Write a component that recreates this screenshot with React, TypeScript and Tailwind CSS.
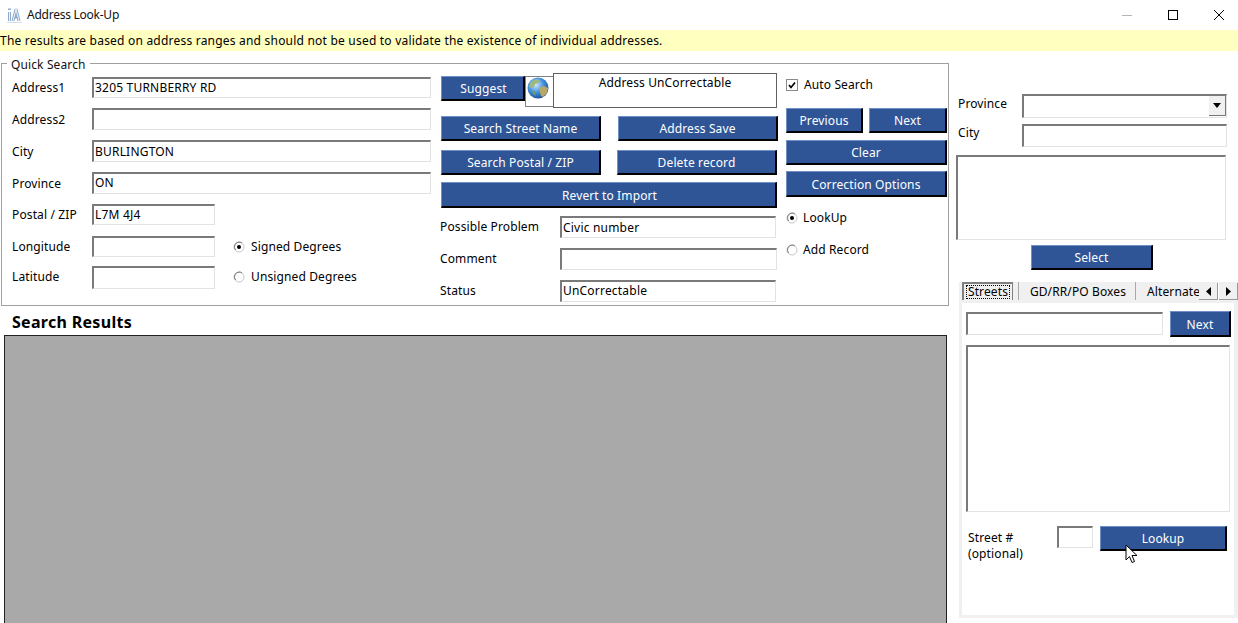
import React from "react";

function Btn({ className, children }: { className: string; children: React.ReactNode }) {
  return (
    <div
      className={`flex items-center justify-center pt-[2px] bg-[#2f5597] text-white border-t border-l border-t-[#6f8fc6] border-l-[#6f8fc6] border-b-2 border-r-2 border-b-black border-r-black ${className}`}
    >
      {children}
    </div>
  );
}

function Input({ className, value }: { className: string; value?: string }) {
  return (
    <div
      className={`flex items-center bg-white pb-px pl-px border-t-2 border-l-2 border-t-[#7a7a7a] border-l-[#7a7a7a] border-b border-r border-b-[#e3e3e3] border-r-[#e3e3e3] whitespace-nowrap tracking-[0.2px] ${className}`}
    >
      {value}
    </div>
  );
}

function Radio({ checked, label, className }: { checked?: boolean; label: string; className: string }) {
  return (
    <div className={`flex items-center ${className}`}>
      <svg width="12" height="12" viewBox="0 0 12 12">
        <circle cx="6" cy="6" r="5" fill="#fff" stroke="#c8c8c8" />
        <path d="M2.5 9A5 5 0 0 1 6 1a5 5 0 0 1 3 1" fill="none" stroke="#777" />
        {checked && <circle cx="6" cy="6" r="2" fill="#000" />}
      </svg>
      <span>{label}</span>
    </div>
  );
}

function Globe() {
  return (
    <svg width="22" height="22" viewBox="0 0 22 22">
      <defs>
        <radialGradient id="ocean" cx="0.4" cy="0.35" r="0.75">
          <stop offset="0" stopColor="#cfe8fc" />
          <stop offset="0.5" stopColor="#3f8fdc" />
          <stop offset="1" stopColor="#173f86" />
        </radialGradient>
      </defs>
      <circle cx="11" cy="11" r="10.5" fill="url(#ocean)" />
      <path d="M4 5c3-3 7-3 9-2l-2 3-3 1-1 3-3 1-2-2z" fill="#9fb87c" />
      <path d="M12 11l5-2 4 2-1 5-4 4-2-1-1-4z" fill="#b8a866" />
      <path d="M5 14l3 1 1 4-3-2z" fill="#6f9a58" />
    </svg>
  );
}

function Row({ label, cls, lbl, children }: { label: string; cls?: string; lbl?: string; children: React.ReactNode }) {
  return (
    <div className={`flex items-center ${cls ?? ""}`}>
      <span className={`w-[80px] shrink-0 ${lbl ?? ""}`}>{label}</span>
      {children}
    </div>
  );
}

export default function App() {
  return (
    <div className="w-[1238px] h-[623px] overflow-hidden bg-white text-black flex flex-col font-['Noto_Sans','DejaVu_Sans',sans-serif] text-[12px] leading-[14px] tracking-[0.12px]">
      {/* Title bar */}
      <div className="h-[30px] flex items-center shrink-0">
        <svg className="ml-[7px] mt-[-1px]" width="15" height="16" viewBox="0 0 15 16" fill="none">
          <path d="M2.5 14V5M2.5 1.5v1.5" stroke="#8ea9cc" strokeWidth="3" />
          <path d="M6 14 9 2l3 12M7 10h4" stroke="#8ea9cc" strokeWidth="3" />
          <path d="M2.5 14V5M6 14 9 2l3 12" stroke="#eef3f9" strokeWidth="1" />
          <path d="M0 15.5h15" stroke="#d5dfeb" />
        </svg>
        <span className="ml-[5px] mt-[-1px] text-[#111] tracking-[-0.25px]">Address Look-Up</span>
        <div className="ml-auto flex items-center">
          <div className="w-[10px] h-px bg-[#b5b5b5] mr-[36px]" />
          <div className="w-[10px] h-[10px] border border-black mr-[36px]" />
          <svg className="mr-[14px]" width="10" height="10" viewBox="0 0 10 10">
            <path d="M0 0 10 10M10 0 0 10" stroke="#000" fill="none" />
          </svg>
        </div>
      </div>

      {/* Notice */}
      <div className="h-[21px] shrink-0 bg-[#ffffc0] flex items-center whitespace-nowrap tracking-[0.21px]">
        The results are based on address ranges and should not be used to validate the existence of individual addresses.
      </div>

      <div className="flex-1 flex min-h-0">
        {/* Left side */}
        <div className="w-[949px] shrink-0 flex flex-col">
          <fieldset className="ml-[1px] mt-[5px] w-[948px] h-[250px] border border-[#a0a0a0] flex">
            <legend className="ml-[5px] px-[4px] text-[#111] relative top-[2px]">Quick Search</legend>
            <div className="flex pl-[10px] pt-[7px] w-full">
              {/* Address column */}
              <div className="w-[430px] shrink-0 flex flex-col">
                <Row label="Address1"><Input className="w-[339px] h-[21px]" value="3205 TURNBERRY RD" /></Row>
                <Row label="Address2" cls="mt-[10px]" lbl="pt-[2px]"><Input className="w-[339px] h-[22px]" /></Row>
                <Row label="City" cls="mt-[10px]" lbl="pt-[2px]"><Input className="w-[339px] h-[22px] pt-px" value="BURLINGTON" /></Row>
                <Row label="Province" cls="mt-[10px]" lbl="pt-[2px]"><Input className="w-[339px] h-[22px]" value="ON" /></Row>
                <Row label="Postal / ZIP" cls="mt-[10px]"><Input className="w-[123px] h-[21px]" value="L7M 4J4" /></Row>
                <Row label="Longitude" cls="mt-[11px]">
                  <Input className="w-[123px] h-[21px]" />
                  <Radio className="ml-[18px] gap-[6px]" checked label="Signed Degrees" />
                </Row>
                <Row label="Latitude" cls="mt-[9px]" lbl="pb-[2px]">
                  <Input className="w-[123px] h-[23px]" />
                  <Radio className="ml-[18px] gap-[6px] pb-[2px]" label="Unsigned Degrees" />
                </Row>
              </div>

              {/* Middle column */}
              <div className="w-[336px] ml-[-1px] shrink-0 flex flex-col mt-[-4px]">
                <div className="flex items-start h-[35px]">
                  <Btn className="w-[84px] h-[25px] mt-[3px] pl-[2px]">Suggest</Btn>
                  <div className="w-[29px] h-[31px] mt-[3px] border border-[#808080] flex items-start justify-start pl-px bg-white">
                    <Globe />
                  </div>
                  <div className="w-[224px] h-[35px] ml-[-1px] bg-white border border-[#606060] flex justify-center pt-[2px]">
                    Address UnCorrectable
                  </div>
                </div>
                <div className="flex justify-between mt-[8px] w-[337px]">
                  <Btn className="w-[160px] h-[25px]">Search Street Name</Btn>
                  <Btn className="w-[160px] h-[25px]">Address Save</Btn>
                </div>
                <div className="flex justify-between mt-[9px] w-[336px]">
                  <Btn className="w-[160px] h-[25px]">Search Postal / ZIP</Btn>
                  <Btn className="w-[160px] h-[25px]">Delete record</Btn>
                </div>
                <Btn className="w-[336px] h-[26px] mt-[7px] pl-[2px]">Revert to Import</Btn>
                <div className="flex items-center justify-between mt-[8px] h-[22px] w-[335px]">
                  <span className="-ml-px">Possible Problem</span>
                  <Input className="w-[216px] h-[22px] pt-px" value="Civic number" />
                </div>
                <div className="flex items-center justify-between mt-[10px] h-[22px] w-[336px]">
                  <span className="-ml-px">Comment</span>
                  <Input className="w-[217px] h-[22px]" />
                </div>
                <div className="flex items-center justify-between mt-[10px] h-[22px] w-[335px]">
                  <span className="-ml-px">Status</span>
                  <Input className="w-[216px] h-[22px]" value="UnCorrectable" />
                </div>
              </div>

              {/* Right column */}
              <div className="ml-[9px] w-[161px] shrink-0 flex flex-col mt-[-4px]">
                <div className="flex items-center gap-[6px] mt-[5px] h-[14px]">
                  <svg width="12" height="12" viewBox="0 0 12 12">
                    <rect x="0.5" y="0.5" width="11" height="11" fill="#fff" stroke="#8a8a8a" />
                    <path d="M3 6l2 2.5L9 3.5" fill="none" stroke="#000" strokeWidth="1.7" />
                  </svg>
                  <span>Auto Search</span>
                </div>
                <div className="flex justify-between mt-[16px]">
                  <Btn className="w-[77px] h-[25px]">Previous</Btn>
                  <Btn className="w-[78px] h-[25px]">Next</Btn>
                </div>
                <Btn className="w-[161px] h-[25px] mt-[7px]">Clear</Btn>
                <Btn className="w-[161px] h-[26px] mt-[6px]">Correction Options</Btn>
                <Radio className="mt-[14px] h-[14px] gap-[5px]" checked label="LookUp" />
                <Radio className="mt-[18px] h-[14px] gap-[5px]" label="Add Record" />
              </div>
            </div>
          </fieldset>

          <div className="ml-[12px] mt-[7px] text-[16px] leading-[19px] font-bold tracking-[0.3px]">Search Results</div>
          <div className="ml-[4px] mt-[3px] w-[943px] flex-1 bg-[#a9a9a9] border-t border-l border-r border-[#222]" />
        </div>

        {/* Right side */}
        <div className="flex-1 flex flex-col pl-[7px] min-w-0">
          <div className="flex items-center mt-[43px] ml-[2px]">
            <span className="w-[64px] pb-[4px]">Province</span>
            <div className="w-[205px] h-[24px] relative">
              <Input className="w-full h-full" />
              <div className="absolute right-[1px] top-[2px] w-[17px] h-[20px] bg-[#f0f0f0] border-r border-b border-[#777] flex items-center justify-center">
                <svg width="8" height="5" viewBox="0 0 8 5"><path d="M0 0h8L4 5z" fill="#000" /></svg>
              </div>
            </div>
          </div>
          <div className="flex items-center mt-[6px] ml-[2px]">
            <span className="w-[64px] pb-[6px]">City</span>
            <Input className="w-[205px] h-[23px]" />
          </div>
          <Input className="w-[270px] h-[85px] mt-[8px]" />
          <Btn className="w-[122px] h-[25px] ml-[75px] mt-[5px]">Select</Btn>

          {/* Tabs and tab page */}
          <div className="ml-[3px] mt-[12px] w-[279px] h-[336px] bg-[#f0f0f0] pl-[3px] pr-[4px] pb-[3px] flex flex-col">
            <div className="flex items-start h-[21px] shrink-0 relative mr-[-4px] overflow-hidden">
              <div className="w-[51px] h-[18px] bg-[#f0f0f0] border-t-2 border-l-2 border-[#808080] border-r border-r-[#808080] flex items-center justify-center">
                <span className="border border-dotted border-black leading-[12px] px-px">Streets</span>
              </div>
              <div className="w-px h-[18px] bg-[#a8a8a8] ml-[5px]" />
              <div className="w-[116px] pl-[2px] text-center h-[18px] leading-[20px]">GD/RR/PO Boxes</div>
              <div className="w-px h-[18px] bg-[#a8a8a8]" />
              <div className="ml-[11px] h-[18px] leading-[20px] whitespace-nowrap">Alternate</div>
              <div className="absolute right-0 top-px flex h-[17px] bg-white">
                <div className="w-[19px] h-[17px] bg-[#f0f0f0] border-r border-b border-[#999] flex items-center justify-center">
                  <svg width="5" height="9" viewBox="0 0 5 9"><path d="M5 0v9L0 4.5z" fill="#000" /></svg>
                </div>
                <div className="w-[19px] h-[17px] ml-px bg-[#f0f0f0] border-r border-b border-[#999] flex items-center justify-center">
                  <svg width="5" height="9" viewBox="0 0 5 9"><path d="M0 0v9l5-4.5z" fill="#000" /></svg>
                </div>
              </div>
            </div>

            <div className="flex-1 bg-white flex flex-col pl-[4px] pt-[8px]">
              <div className="flex items-start">
                <Input className="w-[197px] h-[23px] mt-[1px]" />
                <Btn className="w-[61px] h-[26px] ml-[7px]">Next</Btn>
              </div>
              <Input className="w-[264px] h-[167px] mt-[8px]" />
              <div className="flex items-start mt-[14px]">
                <div className="w-[91px] pl-[2px] pt-[4px] leading-[16px]">
                  Street #
                  <br />
                  (optional)
                </div>
                <Input className="w-[36px] h-[22px]" />
                <div className="relative ml-[7px]">
                  <Btn className="w-[127px] h-[25px]">Lookup</Btn>
                  <svg className="absolute left-[25px] top-[18px]" width="14" height="20" viewBox="0 0 14 20">
                    <path d="M1 1v15l3.5-3.5 2.5 6 2.5-1-2.5-6h5z" fill="#fff" stroke="#000" strokeWidth="1" strokeLinejoin="miter" />
                  </svg>
                </div>
              </div>
            </div>
          </div>
        </div>
      </div>
    </div>
  );
}
